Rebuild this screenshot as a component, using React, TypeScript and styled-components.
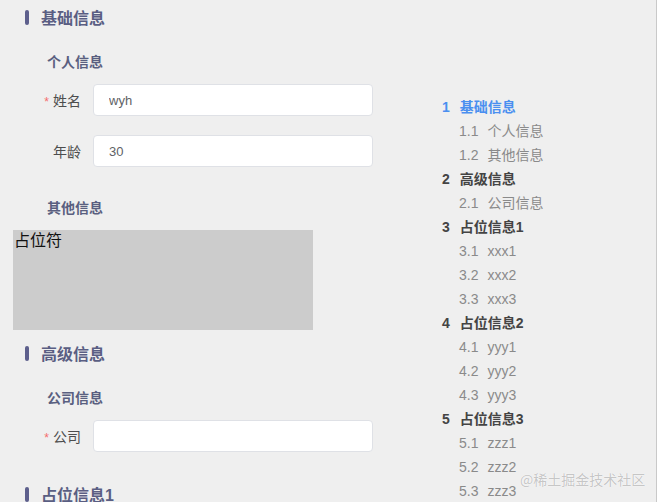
import React from "react";
import styled, { createGlobalStyle } from "styled-components";

const Global = createGlobalStyle`
  html, body { margin: 0; padding: 0; background: #ffffff; }
  body { font-family: "Liberation Sans", "Noto Sans CJK SC", sans-serif; }
  * { box-sizing: border-box; }
`;

const Frame = styled.div`
  width: 657px;
  height: 502px;
  overflow: hidden;
  background: #efefef;
  border-right: 1px solid #c9c9c9;
  display: flex;
  position: relative;
`;

const Main = styled.div`
  width: 429px;
  flex: none;
  display: flex;
  flex-direction: column;
  align-items: flex-start;
  padding: 5px 0 0 13px;
`;

const SectionTitle = styled.div`
  display: flex;
  align-items: center;
  gap: 12px;
  height: 24px;
  flex: none;
  margin: 11px 0 11px 12px;
  font-size: 16px;
  font-weight: 600;
  color: #5a5e83;
  &:first-child { margin-top: 0; }
  &::before {
    content: "";
    width: 4px;
    height: 15px;
    border-radius: 2px;
    background: #5d5f8c;
  }
`;

const SubTitle = styled.div`
  height: 20px;
  flex: none;
  line-height: 20px;
  margin: 12px 0 12px 34px;
  font-size: 14px;
  font-weight: 600;
  color: #5a5f80;
`;

const FormItem = styled.div`
  display: flex;
  flex: none;
  align-items: center;
  margin-bottom: 19px;
`;

const Label = styled.label`
  width: 80px;
  padding-right: 12px;
  text-align: right;
  font-size: 14px;
  color: #4d4d4d;
`;

const Star = styled.span`
  color: #f56c6c;
  font-size: 12px;
  margin-right: 4px;
`;

const Input = styled.input`
  width: 280px;
  height: 32px;
  border: 1px solid #dfe1e6;
  border-radius: 4px;
  background: #fff;
  padding: 0 15px;
  font-family: "Liberation Sans", "Noto Sans CJK SC", sans-serif;
  font-size: 13px;
  color: #606266;
  outline: none;
`;

const Placeholder = styled.div`
  width: 300px;
  height: 100px;
  flex: none;
  background: #cccccc;
  font-family: "Noto Sans CJK SC", sans-serif;
  font-size: 16px;
  line-height: 18px;
  color: #111;
  padding-left: 1px;
`;

const Toc = styled.ul`
  list-style: none;
  margin: 0;
  padding: 95px 0 0 13px;
`;

const TocItem = styled.li<{ $level: number; $active?: boolean }>`
  height: 24px;
  line-height: 24px;
  font-size: 14px;
  white-space: nowrap;
  padding-left: ${(p) => (p.$level === 2 ? 17 : 0)}px;
  font-weight: ${(p) => (p.$level === 1 ? 700 : 400)};
  color: ${(p) => (p.$active ? "#4a8ff0" : p.$level === 1 ? "#444" : "#8a8a8a")};
`;

const Num = styled.span<{ $level: number }>`
  margin-right: ${(p) => (p.$level === 1 ? 10 : 9)}px;
`;

const Watermark = styled.div`
  position: absolute;
  left: 520px;
  top: 469px;
  white-space: nowrap;
  font-family: "Noto Sans CJK SC", sans-serif;
  font-size: 14px;
  color: rgba(190, 190, 190, 0.9);
  text-shadow: 0 0 1px #fff, 0 0 1px #fff;
`;

const toc: { n: string; t: string; l: number; a?: boolean }[] = [
  { n: "1", t: "基础信息", l: 1, a: true },
  { n: "1.1", t: "个人信息", l: 2 },
  { n: "1.2", t: "其他信息", l: 2 },
  { n: "2", t: "高级信息", l: 1 },
  { n: "2.1", t: "公司信息", l: 2 },
  { n: "3", t: "占位信息1", l: 1 },
  { n: "3.1", t: "xxx1", l: 2 },
  { n: "3.2", t: "xxx2", l: 2 },
  { n: "3.3", t: "xxx3", l: 2 },
  { n: "4", t: "占位信息2", l: 1 },
  { n: "4.1", t: "yyy1", l: 2 },
  { n: "4.2", t: "yyy2", l: 2 },
  { n: "4.3", t: "yyy3", l: 2 },
  { n: "5", t: "占位信息3", l: 1 },
  { n: "5.1", t: "zzz1", l: 2 },
  { n: "5.2", t: "zzz2", l: 2 },
  { n: "5.3", t: "zzz3", l: 2 },
];

export default function App() {
  return (
    <>
      <Global />
      <Frame>
        <Main>
          <SectionTitle>基础信息</SectionTitle>
          <SubTitle>个人信息</SubTitle>
          <FormItem>
            <Label><Star>*</Star>姓名</Label>
            <Input defaultValue="wyh" />
          </FormItem>
          <FormItem>
            <Label>年龄</Label>
            <Input defaultValue="30" />
          </FormItem>
          <SubTitle>其他信息</SubTitle>
          <Placeholder>占位符</Placeholder>
          <SectionTitle>高级信息</SectionTitle>
          <SubTitle>公司信息</SubTitle>
          <FormItem>
            <Label><Star>*</Star>公司</Label>
            <Input defaultValue="" />
          </FormItem>
          <SectionTitle>占位信息1</SectionTitle>
        </Main>
        <Toc>
          {toc.map((i) => (
            <TocItem key={i.n} $level={i.l} $active={i.a}>
              <Num $level={i.l}>{i.n}</Num>
              {i.t}
            </TocItem>
          ))}
        </Toc>
        <Watermark>@稀土掘金技术社区</Watermark>
      </Frame>
    </>
  );
}
